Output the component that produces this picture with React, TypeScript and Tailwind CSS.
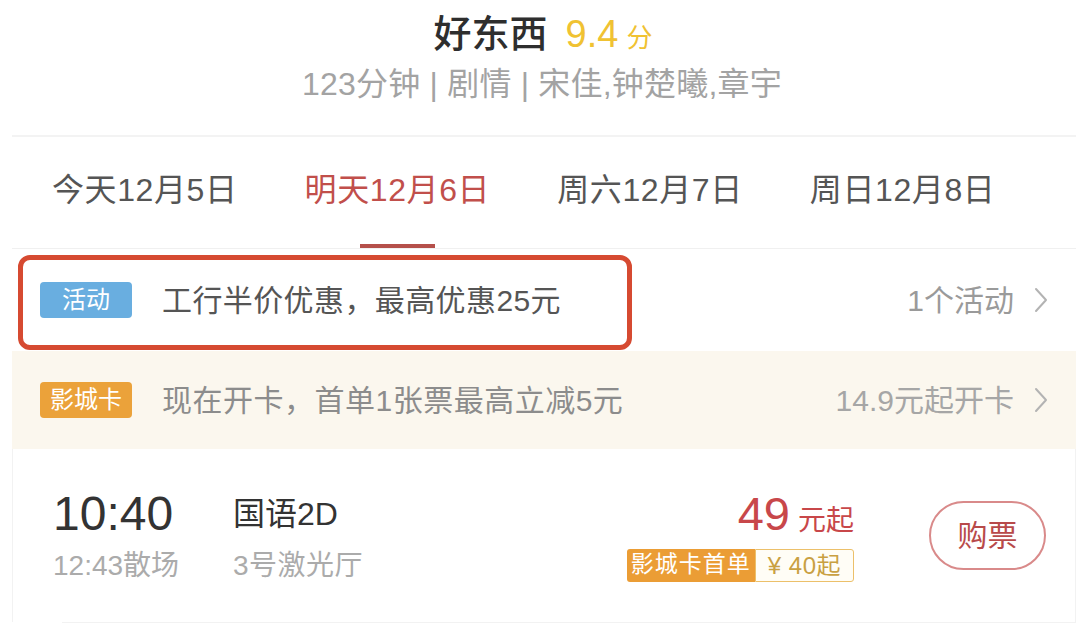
import React from "react";

function Chevron() {
  return (
    <svg width="14" height="26" viewBox="0 0 14 26" className="ml-[20px]">
      <polyline points="2,2 12,13 2,24" fill="none" stroke="#b3b3b3" strokeWidth="2" strokeLinecap="round" strokeLinejoin="round" />
    </svg>
  );
}

const tabs = [
  { label: "今天12月5日", active: false },
  { label: "明天12月6日", active: true },
  { label: "周六12月7日", active: false },
  { label: "周日12月8日", active: false },
];

export default function App() {
  return (
    <div className="w-[1080px] h-[626px] overflow-hidden bg-white font-['Liberation_Sans','Noto_Sans_CJK_SC',sans-serif]">
      <header className="flex flex-col items-center pt-[12px] h-[135px]">
        <div className="flex items-baseline h-[44px] leading-[44px] pl-[6px]">
          <span className="text-[38px] text-[#2e2e2e] font-medium">好东西</span>
          <span className="ml-[18px] text-[38px] text-[#f0c232]">9.4</span>
          <span className="ml-[8px] text-[26px] text-[#f0c232]">分</span>
        </div>
        <div className="mt-[10px] text-[32px] leading-[36px] text-[#a3a3a3] tracking-[0.2px] pl-[4px]">123分钟 | 剧情 | 宋佳,钟楚曦,章宇</div>
      </header>
      <div className="ml-[12px] w-[1064px]">
        <div className="h-[2px] bg-[#f3f3f3]" />
        <div className="flex h-[112px] pl-[40px] gap-[67px] border-b border-[#f0f0f0]">
          {tabs.map((t) => (
            <div key={t.label} className="flex flex-col items-center h-full">
              <div className={`pt-[33px] text-[32px] leading-[40px] tracking-[0.6px] ${t.active ? "text-[#c14f4b]" : "text-[#555]"}`}>{t.label}</div>
              {t.active ? <div className="mt-auto w-[75px] h-[4px] bg-[#b5504a]" /> : null}
            </div>
          ))}
        </div>
        <div className="relative flex items-center h-[102px] pl-[28px] pr-[28px]">
          <div className="flex items-center justify-center w-[92px] h-[36px] rounded-[4px] bg-[#69aee0] text-white text-[24px]">活动</div>
          <div className="ml-[30px] text-[30px] text-[#555] tracking-[0.4px]">工行半价优惠，最高优惠25元</div>
          <div className="ml-auto flex items-center">
            <span className="text-[30px] text-[#9a9a9a]">1个活动</span>
            <Chevron />
          </div>
          <div className="absolute left-[6px] top-[6px] w-[614px] h-[95px] border-[5px] border-[#d64a31] rounded-[12px]" />
        </div>
        <div className="flex items-center h-[98px] pl-[28px] pr-[28px] bg-[#fbf7ee]">
          <div className="flex items-center justify-center w-[92px] h-[36px] rounded-[4px] bg-[#eba23a] text-white text-[24px]">影城卡</div>
          <div className="ml-[30px] text-[30px] text-[#8c8c8c] tracking-[0.5px]">现在开卡，首单1张票最高立减5元</div>
          <div className="ml-auto flex items-center">
            <span className="text-[30px] text-[#a6a6a6]">14.9元起开卡</span>
            <Chevron />
          </div>
        </div>
        <div className="flex items-center h-[173px] pl-[40px] pr-[29px] border-x border-[#f2f2f2]">
          <div className="w-[180px] flex flex-col">
            <div className="text-[48px] leading-[50px] text-[#333]">10:40</div>
            <div className="mt-[11px] text-[28px] leading-[32px] text-[#ababab]">12:43散场</div>
          </div>
          <div className="flex flex-col">
            <div className="text-[32px] leading-[50px] text-[#333]">国语2D</div>
            <div className="mt-[11px] text-[28px] leading-[32px] text-[#ababab] tracking-[0.5px]">3号激光厅</div>
          </div>
          <div className="ml-auto flex flex-col items-end">
            <div className="flex items-baseline h-[50px] leading-[50px] text-[#c8474a]">
              <span className="text-[47px]">49</span>
              <span className="ml-[8px] text-[28px]">元起</span>
            </div>
            <div className="mt-[10px] flex h-[33px] text-[23px] leading-[31px]">
              <div className="px-[4px] bg-[#eb9d35] text-white rounded-l-[3px] tracking-[1px]">影城卡首单</div>
              <div className="px-[12px] border border-[#ecc06a] bg-[#fffdf6] text-[#c9a042] text-[24px] rounded-r-[3px] tracking-[0.5px]">¥ 40起</div>
            </div>
          </div>
          <div className="ml-[75px] flex items-center justify-center w-[117px] h-[69px] rounded-full border-2 border-[#d98a8a] text-[#b84a4a] text-[30px]">购票</div>
        </div>
        <div className="ml-[50px] h-px bg-[#f2f2f2]" />
      </div>
    </div>
  );
}
